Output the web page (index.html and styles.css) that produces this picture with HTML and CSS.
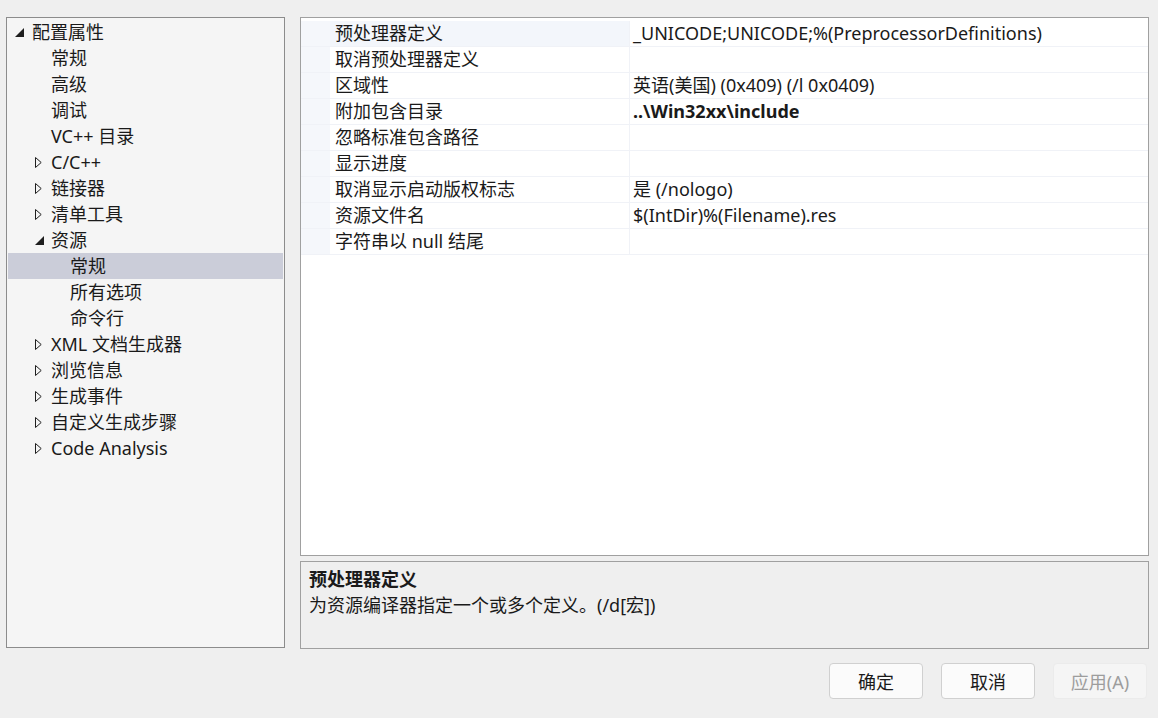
FILE: index.html
```html
<!DOCTYPE html>
<html lang="zh-CN">
<head>
<meta charset="utf-8">
<title>属性页</title>
<link rel="stylesheet" href="styles.css">
</head>
<body>
<div class="dialog">
  <div class="main">
    <div class="tree">
      <div class="node lvl0"><span class="exp"><svg width="9" height="9" viewBox="0 0 9 9"><path d="M9 0 L9 9 L0 9 Z" fill="#1e1e1e"/></svg></span>配置属性</div>
      <div class="node lvl1"><span class="exp"></span>常规</div>
      <div class="node lvl1"><span class="exp"></span>高级</div>
      <div class="node lvl1"><span class="exp"></span>调试</div>
      <div class="node lvl1"><span class="exp"></span>VC++ 目录</div>
      <div class="node lvl1"><span class="exp"><svg width="7" height="11" viewBox="0 0 7 11"><path d="M0.5 0.5 L6.2 5.5 L0.5 10.5 Z" fill="none" stroke="#1e1e1e" stroke-width="1"/></svg></span>C/C++</div>
      <div class="node lvl1"><span class="exp"><svg width="7" height="11" viewBox="0 0 7 11"><path d="M0.5 0.5 L6.2 5.5 L0.5 10.5 Z" fill="none" stroke="#1e1e1e" stroke-width="1"/></svg></span>链接器</div>
      <div class="node lvl1"><span class="exp"><svg width="7" height="11" viewBox="0 0 7 11"><path d="M0.5 0.5 L6.2 5.5 L0.5 10.5 Z" fill="none" stroke="#1e1e1e" stroke-width="1"/></svg></span>清单工具</div>
      <div class="node lvl1"><span class="exp"><svg width="9" height="9" viewBox="0 0 9 9"><path d="M9 0 L9 9 L0 9 Z" fill="#1e1e1e"/></svg></span>资源</div>
      <div class="node lvl2 selected"><span class="exp"></span>常规</div>
      <div class="node lvl2"><span class="exp"></span>所有选项</div>
      <div class="node lvl2"><span class="exp"></span>命令行</div>
      <div class="node lvl1"><span class="exp"><svg width="7" height="11" viewBox="0 0 7 11"><path d="M0.5 0.5 L6.2 5.5 L0.5 10.5 Z" fill="none" stroke="#1e1e1e" stroke-width="1"/></svg></span>XML 文档生成器</div>
      <div class="node lvl1"><span class="exp"><svg width="7" height="11" viewBox="0 0 7 11"><path d="M0.5 0.5 L6.2 5.5 L0.5 10.5 Z" fill="none" stroke="#1e1e1e" stroke-width="1"/></svg></span>浏览信息</div>
      <div class="node lvl1"><span class="exp"><svg width="7" height="11" viewBox="0 0 7 11"><path d="M0.5 0.5 L6.2 5.5 L0.5 10.5 Z" fill="none" stroke="#1e1e1e" stroke-width="1"/></svg></span>生成事件</div>
      <div class="node lvl1"><span class="exp"><svg width="7" height="11" viewBox="0 0 7 11"><path d="M0.5 0.5 L6.2 5.5 L0.5 10.5 Z" fill="none" stroke="#1e1e1e" stroke-width="1"/></svg></span>自定义生成步骤</div>
      <div class="node lvl1"><span class="exp"><svg width="7" height="11" viewBox="0 0 7 11"><path d="M0.5 0.5 L6.2 5.5 L0.5 10.5 Z" fill="none" stroke="#1e1e1e" stroke-width="1"/></svg></span>Code Analysis</div>
    </div>
    <div class="right">
      <div class="grid">
        <div class="row current"><div class="margin"></div><div class="name">预处理器定义</div><div class="value">_UNICODE;UNICODE;%(PreprocessorDefinitions)</div></div>
        <div class="row"><div class="margin"></div><div class="name">取消预处理器定义</div><div class="value"></div></div>
        <div class="row"><div class="margin"></div><div class="name">区域性</div><div class="value">英语(美国) (0x409) (/l 0x0409)</div></div>
        <div class="row"><div class="margin"></div><div class="name">附加包含目录</div><div class="value bold">..\Win32xx\include</div></div>
        <div class="row"><div class="margin"></div><div class="name">忽略标准包含路径</div><div class="value"></div></div>
        <div class="row"><div class="margin"></div><div class="name">显示进度</div><div class="value"></div></div>
        <div class="row"><div class="margin"></div><div class="name">取消显示启动版权标志</div><div class="value">是 (/nologo)</div></div>
        <div class="row"><div class="margin"></div><div class="name">资源文件名</div><div class="value">$(IntDir)%(Filename).res</div></div>
        <div class="row"><div class="margin"></div><div class="name">字符串以 null 结尾</div><div class="value"></div></div>
      </div>
      <div class="desc">
        <div class="desc-title">预处理器定义</div>
        <div class="desc-text">为资源编译器指定一个或多个定义。(/d[宏])</div>
      </div>
    </div>
  </div>
  <div class="buttons">
    <button class="btn">确定</button>
    <button class="btn">取消</button>
    <button class="btn disabled">应用(A)</button>
  </div>
</div>
</body>
</html>
```

FILE: styles.css
```css
* { box-sizing: border-box; }
html, body {
  margin: 0;
  padding: 0;
  background: #efefef;
  width: 1158px;
  height: 718px;
  overflow: hidden;
}
body {
  font-family: "Noto Sans", "Noto Sans CJK SC", sans-serif;
  font-size: 18px;
  color: #1a1a1a;
}
.dialog {
  padding: 17px 9px 0 6px;
}
.main {
  display: flex;
  gap: 15px;
}
.tree {
  width: 279px;
  height: 631px;
  background: #f5f5f5;
  border: 1px solid #8c8c8c;
  padding: 1px 1px 0 1px;
}
.node {
  height: 26px;
  line-height: 26px;
  display: flex;
  align-items: center;
  white-space: nowrap;
}
.node .exp {
  display: flex;
  align-items: center;
  justify-content: flex-start;
  flex: none;
}
.lvl0 { padding-left: 7px; }
.lvl0 .exp { width: 17px; }
.lvl1 { padding-left: 27px; }
.lvl1 .exp { width: 16px; }
.lvl2 { padding-left: 46px; }
.lvl2 .exp { width: 16px; }
.node.selected { background: #cbcdd9; }
.right {
  width: 849px;
  display: flex;
  flex-direction: column;
  gap: 5px;
}
.grid {
  height: 539px;
  background: #ffffff;
  border: 1px solid #a0a0a0;
  padding-top: 3px;
}
.row {
  display: flex;
  height: 26px;
  line-height: 25px;
  border-bottom: 1px solid #f0f2f7;
}
.row .margin {
  width: 29px;
  background: #f5f7fb;
  flex: none;
}
.row .name {
  width: 300px;
  padding-left: 5px;
  border-right: 1px solid #f0f2f7;
  flex: none;
  white-space: nowrap;
}
.row .value {
  flex: 1;
  padding-left: 3px;
  white-space: nowrap;
}
.row.current .name { background: #f3f6fb; }
.value.bold { font-weight: bold; }
.desc {
  height: 88px;
  border: 1px solid #a0a0a0;
  background: #efefef;
  padding: 4px 8px;
}
.desc-title {
  font-weight: bold;
  line-height: 26px;
}
.desc-text {
  line-height: 26px;
}
.buttons {
  display: flex;
  justify-content: flex-end;
  gap: 18px;
  padding: 14px 2px 0 0;
}
.btn {
  width: 94px;
  height: 36px;
  border: 1px solid #d0d0d0;
  border-radius: 4px;
  background: #fbfbfb;
  font-family: "Noto Sans", "Noto Sans CJK SC", sans-serif;
  font-size: 18px;
  color: #1a1a1a;
  padding: 0;
}
.btn.disabled {
  background: #f5f5f5;
  border-color: #ebebeb;
  color: #9d9d9d;
}
```
